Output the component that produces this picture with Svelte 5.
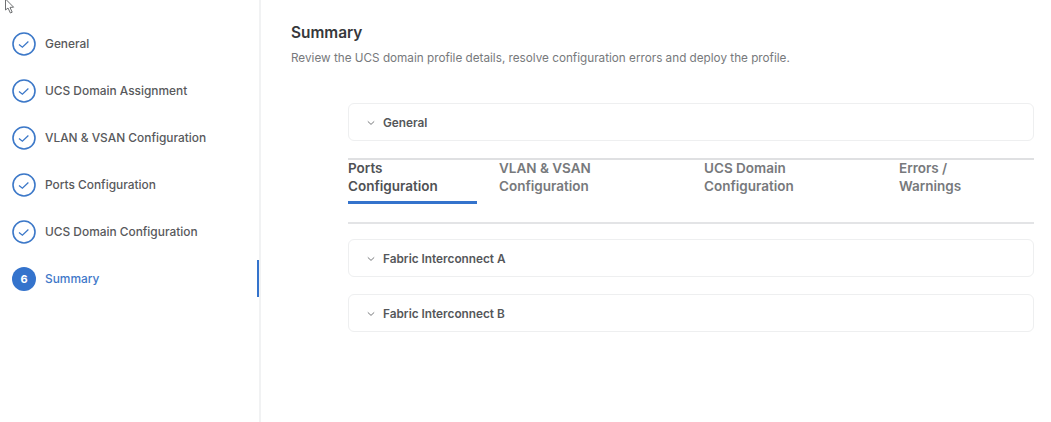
<script lang="ts">
  const steps = [
    { label: 'General', done: true },
    { label: 'UCS Domain Assignment', done: true },
    { label: 'VLAN & VSAN Configuration', done: true },
    { label: 'Ports Configuration', done: true },
    { label: 'UCS Domain Configuration', done: true },
    { label: 'Summary', done: false }
  ];

  const tabs = [
    { lines: ['Ports', 'Configuration'], active: true },
    { lines: ['VLAN & VSAN', 'Configuration'], active: false },
    { lines: ['UCS Domain', 'Configuration'], active: false },
    { lines: ['Errors /', 'Warnings'], active: false }
  ];
</script>

{#snippet chevron()}
  <svg class="chevron" width="8" height="6" viewBox="0 0 8 6" fill="none">
    <path d="M0.8 1.4 L4 4.4 L7.2 1.4" stroke="#77797c" stroke-width="1" />
  </svg>
{/snippet}

<div class="page">
  <svg class="cursor" width="16" height="15" viewBox="0 0 16 15" fill="#fff">
    <path d="M5.5 -1 V10 L8 8 L10.4 13 L12.2 12.2 L10 7.4 L13.6 7.2 Z" stroke="#6e7072" stroke-width="1" />
  </svg>

  <aside class="sidebar">
    {#each steps as step, i}
      <div class="step" class:current={!step.done}>
        {#if step.done}
          <svg class="mark" width="24" height="24" viewBox="0 0 24 24" fill="none">
            <circle cx="12" cy="12" r="11" stroke="#3c78c8" stroke-width="1.6" />
            <path d="M7 12.4 L10.4 15.2 L16.4 9.6" stroke="#3c78c8" stroke-width="1.3" />
          </svg>
        {:else}
          <span class="num">{i + 1}</span>
        {/if}
        <span class="label">{step.label}</span>
      </div>
    {/each}
  </aside>

  <main class="main">
    <h1>Summary</h1>
    <p>Review the UCS domain profile details, resolve configuration errors and deploy the profile.</p>

    <div class="content">
      <div class="card">{@render chevron()}<span>General</span></div>

      <div class="tabs">
        {#each tabs as tab}
          <div class="tab" class:active={tab.active}>
            {tab.lines[0]}<br />{tab.lines[1]}
          </div>
        {/each}
      </div>

      <div class="card fabric-a">{@render chevron()}<span>Fabric Interconnect A</span></div>
      <div class="card fabric-b">{@render chevron()}<span>Fabric Interconnect B</span></div>
    </div>
  </main>
</div>

<style>
  :global(body) {
    margin: 0;
    background: #fff;
  }

  .page {
    position: relative;
    display: flex;
    height: 422px;
    overflow: hidden;
    font-family: Inter, "Liberation Sans", sans-serif;
    color: #58595c;
  }

  .cursor {
    position: absolute;
    top: 0;
    left: 0;
  }

  .sidebar {
    box-sizing: border-box;
    width: 261px;
    flex: none;
    padding-top: 20px;
    border-right: 2px solid #f1f2f3;
  }

  .step {
    position: relative;
    display: flex;
    align-items: center;
    gap: 21px;
    height: 47px;
    padding-left: 12px;
    font-size: 11.9px;
    font-weight: 500;
  }

  .mark,
  .num {
    flex: none;
    width: 24px;
    height: 24px;
    margin-right: -12px;
  }

  .num {
    display: flex;
    align-items: center;
    justify-content: center;
    border-radius: 50%;
    background: #3473cc;
    color: #fff;
    font-size: 11px;
    font-weight: 700;
  }

  .current .label {
    color: #3f78c9;
  }

  .current::after {
    content: '';
    position: absolute;
    top: 5px;
    right: 0;
    width: 2px;
    height: 37px;
    background: #3473cc;
  }

  .main {
    flex: 1;
    padding: 24px 17px 0 30px;
  }

  h1 {
    margin: 0;
    font-size: 15.4px;
    line-height: 18px;
    font-weight: 600;
    color: #36383b;
  }

  p {
    margin: 9px 0 0;
    font-size: 11.72px;
    line-height: 15px;
    color: #77797c;
  }

  .content {
    margin: 37px 0 0 57px;
  }

  .card {
    box-sizing: border-box;
    display: flex;
    align-items: center;
    gap: 8px;
    height: 38px;
    padding: 2px 0 0 18px;
    border: 1px solid #eeeff0;
    border-radius: 6px;
    font-size: 11.8px;
    font-weight: 600;
    color: #55575a;
  }

  .chevron {
    flex: none;
  }

  .tabs {
    display: grid;
    grid-template-columns: 129px 183px 173px 1fr;
    column-gap: 22px;
    margin-top: 17px;
    height: 62px;
    border-top: 2px solid #dfe0e2;
    border-bottom: 2px solid #e3e4e6;
    font-size: 13.5px;
    line-height: 18px;
    font-weight: 600;
    color: #77797c;
  }

  .tab {
    box-sizing: border-box;
    height: 43px;
    margin-top: -1px;
  }

  .tab.active {
    height: 45px;
    border-bottom: 3px solid #3473cc;
    color: #4f5154;
  }

  .fabric-a {
    margin-top: 15px;
  }

  .fabric-b {
    margin-top: 17px;
  }
</style>
